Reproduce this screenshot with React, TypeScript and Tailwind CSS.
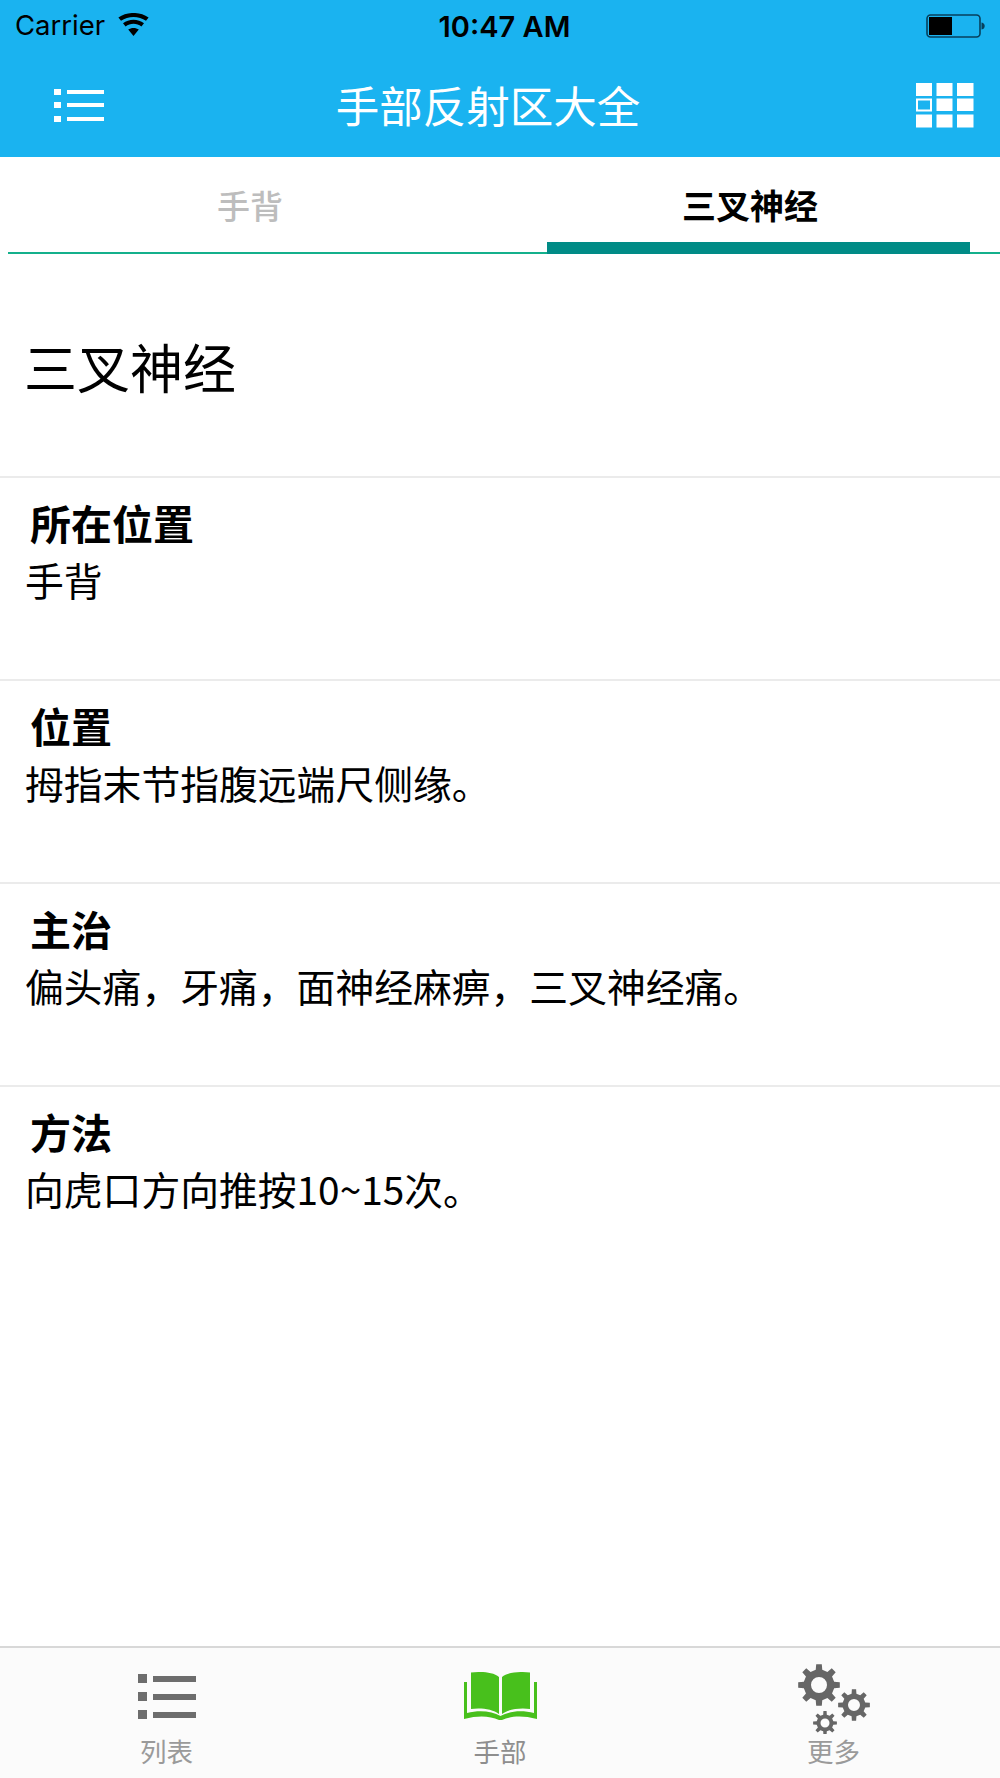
import React from "react";

const cjk = "font-['Noto_Sans_CJK_SC','Noto_Sans',sans-serif]";

function gearPath(cx: number, cy: number, outer: number, root: number, hole: number, teeth: number) {
  const pts: string[] = [];
  const step = (Math.PI * 2) / teeth;
  for (let i = 0; i < teeth; i++) {
    const a = i * step - Math.PI / 2;
    const w = step * 0.2;
    const seq: [number, number][] = [
      [root, a - w * 1.35],
      [outer, a - w * 0.85],
      [outer, a + w * 0.85],
      [root, a + w * 1.35],
    ];
    for (const [r, t] of seq) pts.push(`${(cx + r * Math.cos(t)).toFixed(2)} ${(cy + r * Math.sin(t)).toFixed(2)}`);
  }
  const h = `M${cx - hole} ${cy}a${hole} ${hole} 0 1 0 ${hole * 2} 0a${hole} ${hole} 0 1 0 ${-hole * 2} 0Z`;
  return `M${pts.join("L")}Z${h}`;
}

function Section({ title, body }: { title: string; body: string }) {
  return (
    <section className="h-[203px] border-t-2 border-[#ebebeb] box-border pt-[21px]">
      <h2 className="text-[41px] leading-[46px] font-bold pl-[30px] text-black">{title}</h2>
      <p className="text-[38.8px] leading-[54px] mt-[7px] pl-[25px] text-black">{body}</p>
    </section>
  );
}

function TabItem({ label, active, icon }: { label: string; active?: boolean; icon: React.ReactNode }) {
  return (
    <div className="flex-1 flex flex-col items-center">
      <div className="h-[87px] flex items-center justify-center pt-[8px]">{icon}</div>
      <span className={`text-[26.5px] leading-[32px] ${active ? "text-[#8e8e8e]" : "text-[#9a9a9a]"}`}>{label}</span>
    </div>
  );
}

export default function App() {
  return (
    <div className={`w-[1000px] h-[1778px] bg-white flex flex-col overflow-hidden ${cjk}`}>
      <header className="h-[157px] bg-[#1ab3f0] shrink-0 flex flex-col">
        <div className="h-[50px] pl-[15px] pr-[13px] pt-[2px] flex items-center justify-between font-['Inter',sans-serif] text-black">
          <div className="w-[300px] flex items-center gap-[13px] text-[27.5px] leading-none">
            <span>Carrier</span>
            <svg width="31" height="23" viewBox="0 0 31 23" className="mt-[-4px]">
              <path d="M15.5 23L10.2 16.6C13.2 14.3 17.8 14.3 20.8 16.6Z" fill="black" />
              <path d="M7.6 13.4L5 10.3C10.9 5.5 20.1 5.5 26 10.3L23.4 13.4C18.9 9.9 12.1 9.9 7.6 13.4Z" fill="black" />
              <path d="M3 7.8L0.4 4.6C9 -1.6 22 -1.6 30.6 4.6L28 7.8C20.9 2.7 10.1 2.7 3 7.8Z" fill="black" />
            </svg>
          </div>
          <span className="text-[29px] leading-none font-semibold ml-[7px]">10:47 AM</span>
          <div className="w-[300px] flex justify-end pr-[1px]">
            <svg width="60" height="24" viewBox="0 0 60 24">
              <rect x="1" y="1" width="53" height="22" rx="3.5" fill="none" stroke="#07405c" strokeWidth="1.6" />
              <rect x="3" y="3" width="23" height="18" fill="black" />
              <path d="M55.5 8.5C58 9 58.7 10.5 58.7 12C58.7 13.5 58 15 55.5 15.5Z" fill="#07405c" />
            </svg>
          </div>
        </div>
        <div className="flex-1 flex items-center justify-between pl-[54px] pr-[26px] relative">
          <svg width="50" height="33" viewBox="0 0 50 33" className="mt-[3px]">
            <g fill="white">
              <rect x="0" y="0" width="7" height="6" />
              <rect x="0" y="13" width="7" height="6" />
              <rect x="0" y="27" width="7" height="6" />
              <rect x="13" y="1" width="37" height="4" />
              <rect x="13" y="14" width="37" height="4" />
              <rect x="13" y="28" width="37" height="4" />
            </g>
          </svg>
          <h1 className="absolute left-0 w-[976px] text-center text-[43.5px] leading-none text-white mt-[3px]">手部反射区大全</h1>
          <svg width="58" height="45" viewBox="0 0 58 45" className="mt-[3px]">
            <g fill="white">
              <rect x="0" y="0" width="16" height="13" />
              <rect x="20.5" y="0" width="16" height="13" />
              <rect x="41" y="0" width="16.5" height="13" />
              <rect x="1" y="16.5" width="14" height="11" fill="none" stroke="white" strokeWidth="2" />
              <rect x="20.5" y="15.5" width="16" height="12.5" />
              <rect x="41" y="15.5" width="16.5" height="12.5" />
              <rect x="0" y="31.5" width="16" height="13" />
              <rect x="20.5" y="31.5" width="16" height="13" />
              <rect x="41" y="31.5" width="16.5" height="13" />
            </g>
          </svg>
        </div>
      </header>

      <nav className="h-[95px] shrink-0 ml-[8px] border-b-[2px] border-[#14b08c] flex relative box-content">
        <div className="w-[483px] flex justify-center items-center pl-[1px] pt-[2px] text-[33px] font-medium text-[#bdbdbd]">手背</div>
        <div className="flex-1 flex justify-center items-center pl-[9px] text-[34px] font-bold text-black">三叉神经</div>
        <div className="absolute left-[539px] bottom-[-2px] w-[423px] h-[12px] bg-[#008b86]" />
      </nav>

      <div className="flex-1 flex flex-col">
        <div className="h-[222px] flex items-center pl-[24px] pt-[3px] text-[53px] leading-none text-black">三叉神经</div>
        <Section title="所在位置" body="手背" />
        <Section title="位置" body="拇指末节指腹远端尺侧缘。" />
        <Section title="主治" body="偏头痛，牙痛，面神经麻痹，三叉神经痛。" />
        <Section title="方法" body="向虎口方向推按10~15次。" />
      </div>

      <footer className="h-[132px] shrink-0 bg-[#fbfbfb] border-t-2 border-[#d8d8d8] flex box-border">
        <div className="w-[333px]">
          <TabItem
            label="列表"
            icon={
              <svg width="58" height="46" viewBox="0 0 58 46">
                <g fill="#6d6d6d">
                  <rect x="0" y="1" width="9" height="9" />
                  <rect x="0" y="19" width="9" height="9" />
                  <rect x="0" y="37" width="9" height="9" />
                  <rect x="15" y="3" width="43" height="6" />
                  <rect x="15" y="21" width="43" height="6" />
                  <rect x="15" y="39" width="43" height="6" />
                </g>
              </svg>
            }
          />
        </div>
        <div className="w-[334px]">
          <TabItem
            label="手部"
            active
            icon={
              <svg width="73" height="48" viewBox="0 0 73 48">
                <g fill="#48c01c">
                  <path d="M7 0.5C15 -0.5 29 -0.5 35 5V42C29 37 16 35.5 7 37Z" />
                  <path d="M66 0.5C58 -0.5 44 -0.5 38 5V42C44 37 57 35.5 66 37Z" />
                  <path d="M0 10H3V41C15 38 28 39 36.5 44C45 39 58 38 70 41V10H73V47C58 43 47 44 38 48H35C26 44 15 43 0 47Z" />
                </g>
              </svg>
            }
          />
        </div>
        <div className="w-[333px]">
          <TabItem
            label="更多"
            icon={
              <svg width="72" height="70" viewBox="0 0 72 70" className="mt-[6px]">
                <g fill="#666666" fillRule="evenodd">
                  <path d={gearPath(21, 21, 21, 15.5, 8, 8)} />
                  <path d={gearPath(56, 41, 16, 11.5, 6, 8)} />
                  <path d={gearPath(27, 59, 12, 8.5, 4.5, 8)} />
                </g>
              </svg>
            }
          />
        </div>
      </footer>
    </div>
  );
}
